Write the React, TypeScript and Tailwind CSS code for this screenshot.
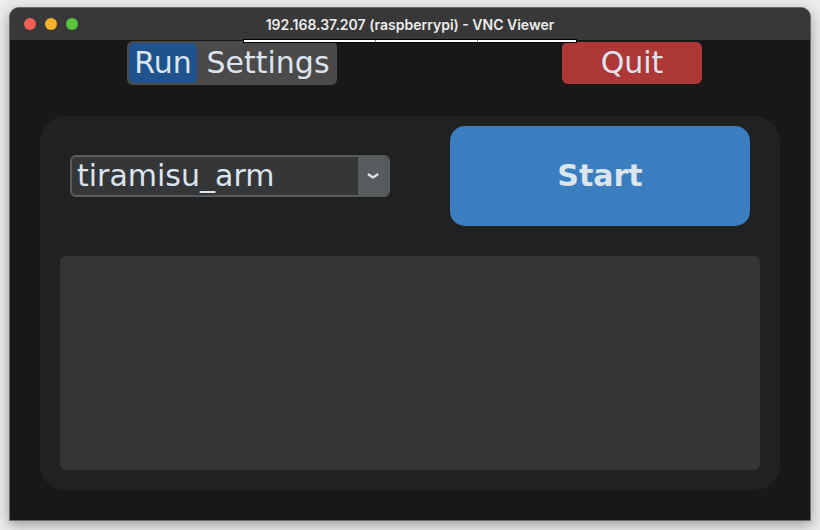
export default function App() {
  const font = { fontFamily: '"DejaVu Sans", sans-serif' };
  return (
    <div className="w-[820px] h-[530px] bg-[#ececec] pt-[7px] pl-[9px] overflow-hidden">
      <div className="relative w-[802px] h-[514px] rounded-t-[10px] border border-[#6b6b6b] bg-[#181818] shadow-[0_4px_14px_rgba(0,0,0,0.35)] flex flex-col overflow-hidden">
        {/* title bar */}
        <div className="relative h-[32px] shrink-0 bg-[#383838] flex items-center">
          <div className="flex items-center gap-[9px] pl-[14px]">
            <span className="w-[12px] h-[12px] rounded-full bg-[#ed5f57]" />
            <span className="w-[12px] h-[12px] rounded-full bg-[#f4b12c]" />
            <span className="w-[12px] h-[12px] rounded-full bg-[#5ac43d]" />
          </div>
          <div
            className="absolute inset-0 flex items-center justify-center text-[14px] font-semibold text-[#ececec]"
            style={{ fontFamily: '"Inter", "Liberation Sans", sans-serif' }}
          >
            192.168.37.207 (raspberrypi) - VNC Viewer
          </div>
        </div>

        {/* toolbar handle line */}
        <div className="absolute left-[233px] top-[31px] w-[334px] h-[4px] bg-white border border-black flex">
          <div className="w-[132px] border-r border-[#888]" />
          <div className="w-[102px] border-r border-[#888]" />
        </div>

        {/* content */}
        <div className="flex flex-col" style={font}>
          <div className="flex items-start h-[45px] pt-[1px]">
            <div className="ml-[117px] w-[210px] h-[44px] rounded-[6px] bg-[#4a4a4a] p-[2px] flex text-[30px] leading-none text-[#dce4ee]">
              <div className="w-[68px] h-full rounded-[5px] bg-[#1f538d] flex items-center justify-center">Run</div>
              <div className="flex-1 flex items-center justify-center pl-[4px]">Settings</div>
            </div>
            <button className="ml-auto mr-[108px] mt-[1px] w-[140px] h-[42px] rounded-[6px] bg-[#ae3737] text-[30px] leading-none text-[#dce4ee] flex items-center justify-center">
              Quit
            </button>
          </div>

          <div className="mx-[30px] mt-[31px] h-[374px] rounded-[25px] bg-[#212121] px-[20px] pt-[10px] flex flex-col">
            <div className="flex items-start h-[100px]">
              <div className="ml-[10px] mt-[29px] w-[320px] h-[42px] rounded-[6px] border-2 border-[#565b5e] bg-[#343638] flex overflow-hidden">
                <div className="flex-1 flex items-center pl-[5px] text-[30px] leading-none text-[#dce4ee]">tiramisu_arm</div>
                <div className="w-[30px] bg-[#565b5e] flex items-center justify-center">
                  <svg width="14" height="10" viewBox="0 0 14 10">
                    <path d="M2.5 3.5 L7 6.5 L11.5 3.5" stroke="#dce4ee" strokeWidth="2.2" fill="none" strokeLinecap="round" strokeLinejoin="round" />
                  </svg>
                </div>
              </div>
              <button className="ml-auto mr-[10px] w-[300px] h-[100px] rounded-[15px] bg-[#3a7ebf] text-[30px] font-bold leading-none text-[#dce4ee] flex items-center justify-center">
                Start
              </button>
            </div>
            <div className="mt-[30px] h-[214px] rounded-[6px] bg-[#343434]" />
          </div>
        </div>
      </div>
    </div>
  );
}
